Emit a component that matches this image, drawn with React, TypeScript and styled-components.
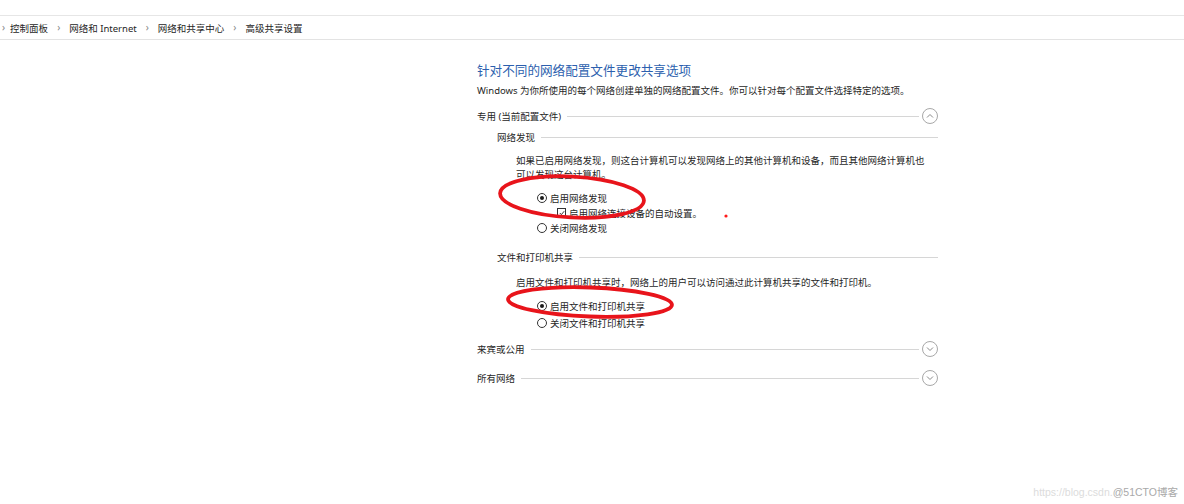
import { Fragment } from 'react';
import styled, { createGlobalStyle } from 'styled-components';

const GlobalStyle = createGlobalStyle`
  html, body {
    margin: 0;
    padding: 0;
    background: #ffffff;
  }
  body {
    font-family: "Noto Sans", "Noto Sans CJK SC", sans-serif;
    color: #1f1f1f;
  }
`;

const Page = styled.div`
  position: relative;
  width: 1184px;
  height: 504px;
  overflow: hidden;
  background: #fff;
`;

const Breadcrumb = styled.div`
  margin-top: 15px;
  height: 23px;
  border-top: 1px solid #e6e6e6;
  border-bottom: 1px solid #e3e3e3;
  display: flex;
  align-items: center;
  font-size: 9.5px;
  color: #262626;
  padding-left: 2px;
`;

const Crumb = styled.span`
  white-space: nowrap;
`;

const Sep = styled.span`
  color: #888;
  font-size: 10px;
  margin: 0 9px 0 9px;
  transform: translateY(-1px);
  &:first-child {
    margin-left: 0;
    margin-right: 5px;
  }
`;

const Main = styled.div`
  width: 461px;
  margin-left: 477px;
  display: flex;
  flex-direction: column;
`;

const Title = styled.h1`
  margin: 22px 0 0;
  font-size: 12.6px;
  line-height: 18px;
  font-weight: 400;
  color: #2c5fae;
`;

const Desc = styled.p`
  margin: 4px 0 0;
  font-size: 9.5px;
  line-height: 14px;
`;

const SectionRow = styled.div<{ $mt: number }>`
  margin-top: ${({ $mt }) => $mt}px;
  height: 16px;
  display: flex;
  align-items: center;
  font-size: 9.5px;
  color: #262626;
`;

const SubRow = styled.div<{ $mt: number }>`
  margin-top: ${({ $mt }) => $mt}px;
  margin-left: 20px;
  height: 14px;
  display: flex;
  align-items: center;
  font-size: 9.5px;
  color: #262626;
`;

const Rule = styled.div<{ $gapRight: number }>`
  flex: 1;
  height: 1px;
  background: #d6d6d6;
  margin-left: 6px;
  margin-right: ${({ $gapRight }) => $gapRight}px;
`;

const Toggle = styled.span`
  width: 14px;
  height: 14px;
  border: 1px solid #a8a8a8;
  border-radius: 50%;
  display: flex;
  align-items: center;
  justify-content: center;
  flex: none;
`;

const Para = styled.p<{ $mt: number }>`
  margin: ${({ $mt }) => $mt}px 0 0 39px;
  font-size: 9.5px;
  line-height: 14px;
  color: #1f1f1f;
`;

const Option = styled.div<{ $mt: number; $indent: number }>`
  margin-top: ${({ $mt }) => $mt}px;
  margin-left: ${({ $indent }) => $indent}px;
  height: 15px;
  display: flex;
  align-items: center;
  gap: 3px;
  font-size: 9.5px;
  color: #1f1f1f;
`;

const Radio = styled.span<{ $on: boolean }>`
  width: 8px;
  height: 8px;
  border: 1px solid #333;
  border-radius: 50%;
  display: flex;
  align-items: center;
  justify-content: center;
  flex: none;
  &::after {
    content: '';
    width: 4px;
    height: 4px;
    border-radius: 50%;
    background: #1a1a1a;
    display: ${({ $on }) => ($on ? 'block' : 'none')};
  }
`;

const Check = styled.span`
  width: 7px;
  height: 7px;
  border: 1px solid #333;
  display: flex;
  align-items: center;
  justify-content: center;
  flex: none;
`;

const Marks = styled.svg`
  position: absolute;
  left: 0;
  top: 0;
  pointer-events: none;
`;

const Watermark = styled.div`
  position: absolute;
  right: 6px;
  bottom: 5px;
  font-family: "Liberation Sans", "Noto Sans CJK SC", sans-serif;
  font-size: 10.5px;
  color: #dcdcdc;
  white-space: nowrap;
  span {
    color: #a9a9a9;
  }
`;

function Chevron({ up }: { up: boolean }) {
  return (
    <svg width="8" height="6" viewBox="0 0 8 6">
      <path
        d={up ? 'M1 4.5 L4 1.5 L7 4.5' : 'M1 1.5 L4 4.5 L7 1.5'}
        fill="none"
        stroke="#8a8a8a"
        strokeWidth="1"
      />
    </svg>
  );
}

const crumbs = ['控制面板', '网络和 Internet', '网络和共享中心', '高级共享设置'];

export default function App() {
  return (
    <Page>
      <GlobalStyle />
      <Breadcrumb>
        {crumbs.map((c) => (
          <Fragment key={c}>
            <Sep>›</Sep>
            <Crumb>{c}</Crumb>
          </Fragment>
        ))}
      </Breadcrumb>

      <Main>
        <Title>针对不同的网络配置文件更改共享选项</Title>
        <Desc>Windows 为你所使用的每个网络创建单独的网络配置文件。你可以针对每个配置文件选择特定的选项。</Desc>

        <SectionRow $mt={10}>
          专用 (当前配置文件)
          <Rule $gapRight={3} />
          <Toggle>
            <Chevron up />
          </Toggle>
        </SectionRow>

        <SubRow $mt={6}>
          网络发现
          <Rule $gapRight={0} />
        </SubRow>
        <Para $mt={10}>
          如果已启用网络发现，则这台计算机可以发现网络上的其他计算机和设备，而且其他网络计算机也
          <br />
          可以发现这台计算机。
        </Para>
        <Option $mt={8} $indent={60}>
          <Radio $on />
          启用网络发现
        </Option>
        <Option $mt={0} $indent={80}>
          <Check>
            <svg width="6" height="6" viewBox="0 0 6 6">
              <path d="M0.8 3 L2.4 4.6 L5.2 1.2" fill="none" stroke="#222" strokeWidth="0.9" />
            </svg>
          </Check>
          启用网络连接设备的自动设置。
        </Option>
        <Option $mt={0} $indent={60}>
          <Radio $on={false} />
          关闭网络发现
        </Option>

        <SubRow $mt={15}>
          文件和打印机共享
          <Rule $gapRight={0} />
        </SubRow>
        <Para $mt={12}>启用文件和打印机共享时，网络上的用户可以访问通过此计算机共享的文件和打印机。</Para>
        <Option $mt={8} $indent={60}>
          <Radio $on />
          启用文件和打印机共享
        </Option>
        <Option $mt={2} $indent={60}>
          <Radio $on={false} />
          关闭文件和打印机共享
        </Option>

        <SectionRow $mt={11}>
          来宾或公用
          <Rule $gapRight={3} />
          <Toggle>
            <Chevron up={false} />
          </Toggle>
        </SectionRow>
        <SectionRow $mt={13}>
          所有网络
          <Rule $gapRight={3} />
          <Toggle>
            <Chevron up={false} />
          </Toggle>
        </SectionRow>
      </Main>

      <Marks width="1184" height="504" viewBox="0 0 1184 504">
        <ellipse cx="572" cy="197" rx="72" ry="20.5" fill="none" stroke="#e8141b" strokeWidth="3.8" transform="rotate(3 572 197)" />
        <ellipse cx="590" cy="302" rx="82" ry="14.5" fill="none" stroke="#e8141b" strokeWidth="3.8" transform="rotate(2 590 302)" />
        <circle cx="726" cy="216" r="1.6" fill="#ff1a1a" />
      </Marks>

      <Watermark>
        https://blog.csdn.<span>@51CTO博客</span>
      </Watermark>
    </Page>
  );
}
